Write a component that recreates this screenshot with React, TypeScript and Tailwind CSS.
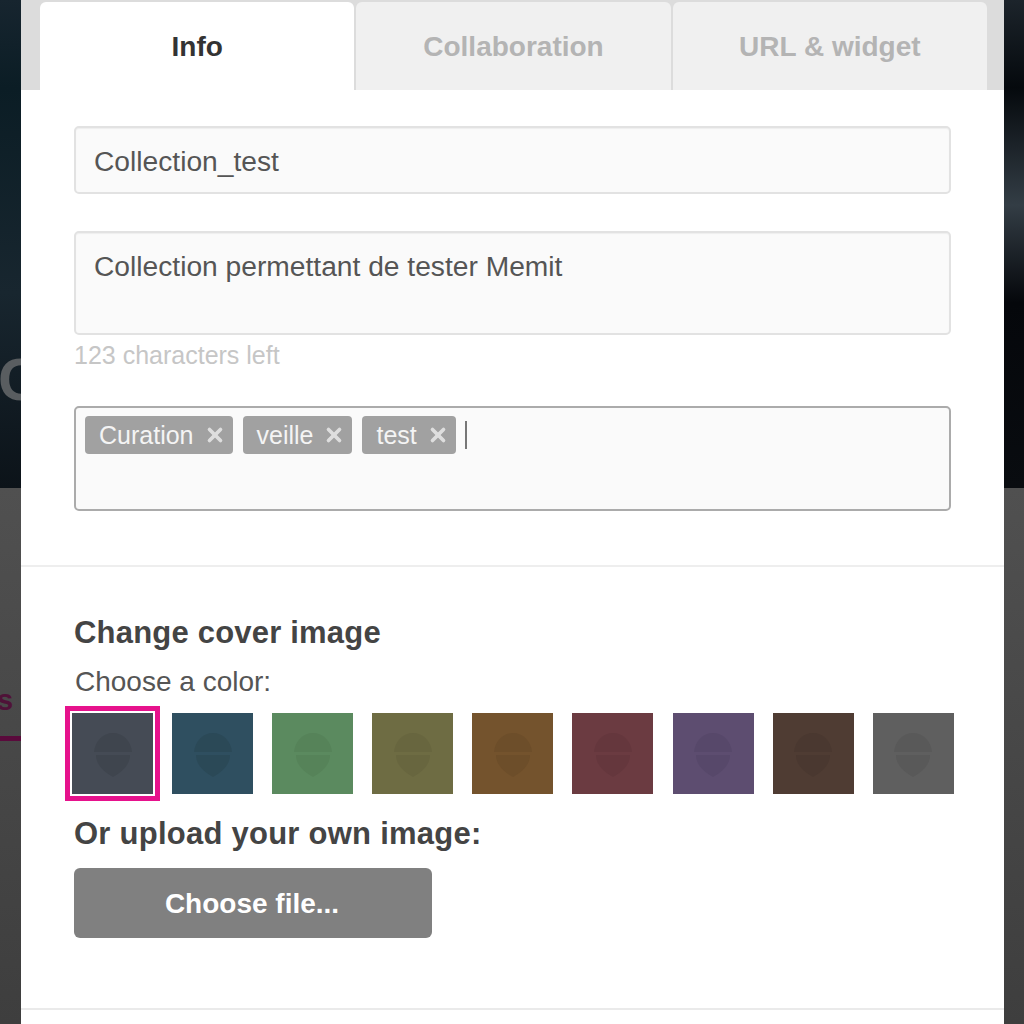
import React from 'react';
import { X } from 'lucide-react';

const swatches = ['#454b55', '#2f4f60', '#5b8a5f', '#6e6c43', '#74532d', '#6b3b41', '#5d4d70', '#4f3c33', '#5f5f5f'];
const acornColors = ['#3f454e', '#2b4957', '#568359', '#68663f', '#6d4e2a', '#65373d', '#57486a', '#4a3830', '#595959'];
const tags = ['Curation', 'veille', 'test'];

const Acorn = ({ color }: { color: string }) => (
  <svg width="42" height="48" viewBox="0 0 42 48" fill={color}>
    <path d="M21 3c10 0 18 8 19 19H2C3 11 11 3 21 3z" />
    <path d="M4 25h34c0 10-8 17-17 22C12 42 4 35 4 25z" />
  </svg>
);

const App = () => {
  return (
    <div className="flex h-[1024px] w-[1024px] overflow-hidden font-['Liberation_Sans',Arial,sans-serif] text-[#4a4a4a]">
      {/* left of backdrop */}
      <div className="flex w-[21px] shrink-0 flex-col overflow-hidden">
        <div className="h-[488px] overflow-hidden bg-[linear-gradient(to_bottom,#17252f_0%,#0b1d25_18%,#18262f_60%,#0c1319_100%)] pt-[342px] text-[60px] font-bold leading-[76px] text-[#595d60]">
          <div className="-ml-[2px]">C</div>
        </div>
        <div className="flex-1 bg-gradient-to-b from-[#505050] to-[#3e3e3e] pt-[197px]">
          <div className="-ml-[3px] text-[29px] font-bold leading-[30px] text-[#4f1238]">s</div>
          <div className="mt-[21px] h-[5px] bg-[#5a0a3c]" />
        </div>
      </div>

      {/* modal */}
      <div className="flex w-[983px] shrink-0 flex-col bg-white">
        <div className="flex h-[90px] shrink-0 gap-[2px] bg-[#dcdcdc] pl-[19px] pr-[17px] pt-[2px] text-[28px] font-bold">
          <div className="flex flex-1 items-center justify-center rounded-t-md bg-white pt-[2px] text-[#333333]">Info</div>
          <div className="flex flex-1 items-center justify-center rounded-t-md bg-[#f0f0f0] pt-[2px] text-[#b4b4b4]">Collaboration</div>
          <div className="flex flex-1 items-center justify-center rounded-t-md bg-[#f0f0f0] pt-[2px] text-[#b4b4b4]">URL &amp; widget</div>
        </div>

        <div className="flex flex-col px-[53px]">
          <div className="mt-[36px] flex h-[68px] w-[877px] items-center rounded-[5px] border-2 border-[#e2e2e2] bg-[#fafafa] px-[18px] pt-[2px] text-[28.2px] text-[#555555] shadow-[inset_0_1px_1px_rgba(0,0,0,0.05)]">
            Collection_test
          </div>
          <div className="mt-[37px] h-[104px] w-[877px] rounded-[5px] border-2 border-[#e2e2e2] bg-[#fafafa] px-[18px] pt-[17px] text-[28.2px] leading-[32px] text-[#555555] shadow-[inset_0_1px_1px_rgba(0,0,0,0.05)]">
            Collection permettant de tester Memit
          </div>
          <div className="mt-[6px] h-[28px] text-[25px] leading-[28px] text-[#c6c6c6]">123 characters left</div>

          <div className="mt-[37px] flex h-[105px] w-[877px] items-start gap-[10px] rounded-[5px] border-2 border-[#ababab] bg-[#fafafa] pl-[9px] pt-[8px]">
            {tags.map((tag) => (
              <div key={tag} className="flex h-[38px] items-center gap-[10px] rounded-[4px] bg-[#a1a1a1] pl-[14px] pr-[7px] text-[25px] text-[#f4f4f4]">
                <span className="pt-[2px]">{tag}</span>
                <X className="h-[22px] w-[22px] text-[#dedede]" strokeWidth={4} />
              </div>
            ))}
            <div className="-ml-[1px] mt-[5px] h-[28px] w-[2px] bg-[#777777]" />
          </div>
        </div>

        <div className="mt-[54px] h-[2px] shrink-0 bg-[#eeeeee]" />

        <div className="flex flex-col px-[53px]">
          <div className="mt-[49px] text-[31px] font-bold leading-[34px] tracking-[0.2px] text-[#444444]">Change cover image</div>
          <div className="ml-[1px] mt-[16px] text-[28px] leading-[32px] text-[#555555]">Choose a color:</div>

          <div className="-ml-[9px] mt-[8px] flex h-[95px] items-center gap-[19.1px]">
            {swatches.map((color, i) => (
              <div
                key={color}
                className={i === 0 ? '-mr-[7px] border-[5px] border-[#e6128c] p-[1px]' : ''}
              >
                <div
                  className={`flex items-center justify-center ${i === 0 ? 'h-[83px] w-[83px] border border-white' : 'h-[81px] w-[81px]'}`}
                  style={{ backgroundColor: color }}
                >
                  <Acorn color={acornColors[i]} />
                </div>
              </div>
            ))}
          </div>

          <div className="mt-[16px] text-[31px] font-bold leading-[34px] tracking-[0.25px] text-[#444444]">Or upload your own image:</div>
          <div className="mt-[17px] flex h-[70px] w-[358px] items-center justify-center rounded-[6px] bg-[#808080] pr-[2px] pt-[2px] text-[28px] font-bold text-white">
            Choose file...
          </div>
        </div>

        <div className="mt-[70px] h-[2px] shrink-0 bg-[#eaeaea]" />
      </div>

      {/* right of backdrop */}
      <div className="flex flex-1 flex-col">
        <div className="h-[488px] bg-[linear-gradient(to_bottom,#1c242b_0%,#05090d_18%,#333d45_42%,#05070b_62%,#090c10_100%)]" />
        <div className="flex-1 bg-gradient-to-b from-[#505050] to-[#3e3e3e]" />
      </div>
    </div>
  );
};

export default App;
